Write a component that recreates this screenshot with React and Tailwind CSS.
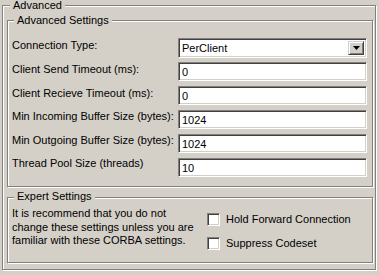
import React from "react";

const etched =
  "relative border border-[#808080] shadow-[1px_1px_0_#ffffff,inset_1px_1px_0_#ffffff]";

function Legend({ children, className }) {
  return (
    <span
      className={`absolute bg-[#d4d0c8] px-[3px] leading-[13px] whitespace-nowrap ${className}`}
    >
      {children}
    </span>
  );
}

function Sunken({ className, children }) {
  return (
    <div
      className={`flex border border-t-[#808080] border-l-[#808080] border-b-white border-r-white ${className}`}
    >
      <div className="flex flex-1 min-w-0 bg-white shadow-[inset_1px_1px_0_#404040,inset_-1px_-1px_0_#d4d0c8]">
        {children}
      </div>
    </div>
  );
}

function TextBox({ value }) {
  return (
    <Sunken className="w-[189px] h-[19px]">
      <span className="pl-[3px] pt-[3px] leading-[13px]">{value}</span>
    </Sunken>
  );
}

function Combo({ value }) {
  return (
    <Sunken className="w-[189px] h-[20px]">
      <span className="flex-1 pl-[3px] pt-[3px] leading-[13px]">{value}</span>
      <div className="mt-[2px] mr-[2px] mb-[2px] w-[16px] flex items-center justify-center bg-[#d4d0c8] border border-t-[#d4d0c8] border-l-[#d4d0c8] border-b-[#404040] border-r-[#404040] shadow-[inset_1px_1px_0_#ffffff,inset_-1px_-1px_0_#808080]">
        <svg width="7" height="4" viewBox="0 0 7 4">
          <polygon points="0,0 7,0 3.5,4" fill="#000" />
        </svg>
      </div>
    </Sunken>
  );
}

function Row({ label, children, lm = "mt-[1px]" }) {
  return (
    <div className="flex items-start h-[24px]">
      <div className={`w-[166px] leading-[13px] whitespace-nowrap ${lm}`}>{label}</div>
      {children}
    </div>
  );
}

function CheckBox({ label }) {
  return (
    <div className="flex items-center h-[13px]">
      <div className="w-[13px] h-[13px] border border-t-[#808080] border-l-[#808080] border-b-white border-r-white">
        <div className="w-full h-full bg-white shadow-[inset_1px_1px_0_#404040,inset_-1px_-1px_0_#d4d0c8]" />
      </div>
      <span className="ml-[6px] leading-[13px] whitespace-nowrap">{label}</span>
    </div>
  );
}

export default function App() {
  return (
    <div className="w-[379px] h-[275px] bg-[#d4d0c8] pt-[5px] pl-[2px] font-['Liberation_Sans',Arial,sans-serif] text-[11px] leading-[13px] text-black overflow-hidden">
      <div className={`${etched} w-[374px] h-[265px] pt-[14px] pl-[4px]`}>
        <Legend className="left-[7px] top-[-7px]">Advanced</Legend>

        <div className={`${etched} w-[366px] h-[167px] pt-[17px] pl-[4px]`}>
          <Legend className="left-[6px] top-[-7px]">Advanced Settings</Legend>
          <Row label="Connection Type:" lm="mt-[1px]">
            <Combo value="PerClient" />
          </Row>
          <Row label="Client Send Timeout (ms):" lm="mt-[1px]">
            <TextBox value="0" />
          </Row>
          <Row label="Client Recieve Timeout (ms):" lm="mt-[1px]">
            <TextBox value="0" />
          </Row>
          <Row label="Min Incoming Buffer Size (bytes):" lm="mt-0">
            <TextBox value="1024" />
          </Row>
          <Row label="Min Outgoing Buffer Size (bytes):" lm="mt-0">
            <TextBox value="1024" />
          </Row>
          <Row label="Thread Pool Size (threads)" lm="mt-[-1px]">
            <TextBox value="10" />
          </Row>
        </div>

        <div className={`${etched} mt-[10px] w-[366px] h-[66px] flex`}>
          <Legend className="left-[6px] top-[-8px]">Expert Settings</Legend>
          <div className="w-[199px] pl-[4px] pt-[9px] leading-[13.5px]">
            It is recommend that you do not
            <br />
            change these settings unless you are
            <br />
            familiar with these CORBA settings.
          </div>
          <div className="flex flex-col gap-[11px] pt-[15px]">
            <CheckBox label="Hold Forward Connection" />
            <CheckBox label="Suppress Codeset" />
          </div>
        </div>
      </div>
    </div>
  );
}
